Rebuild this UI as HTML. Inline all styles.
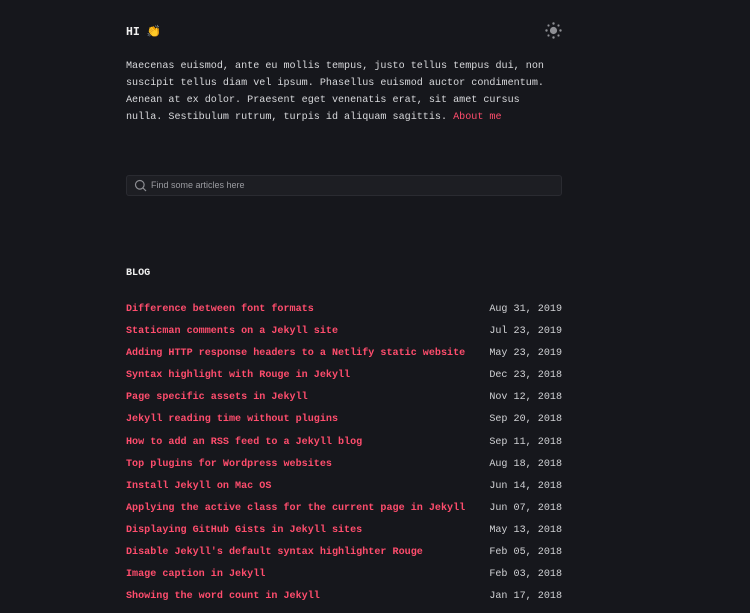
<!DOCTYPE html>
<html><head><meta charset="utf-8"><style>
html,body{margin:0;background:#16171c;}
body{width:750px;height:600px;overflow:hidden;font-family:"Liberation Mono",monospace;color:#d8d9dc;font-size:10.1px;}
.wrap{position:absolute;left:126px;width:436px;}
.hi{position:absolute;left:126px;top:24px;font-weight:bold;font-size:11.5px;color:#f0f0f0;font-family:"Liberation Mono","DejaVu Sans",monospace;}
.sun{position:absolute;left:545px;top:22px;}
.intro{top:58px;line-height:17px;width:425px;}
a{color:#ff4d6d;text-decoration:none;}
.search{position:absolute;left:126px;top:175px;width:434px;height:19px;border:1px solid #2a2b31;background:#1d1e23;border-radius:3px;}
.search span{position:absolute;left:24px;top:4px;font-family:"Liberation Sans",sans-serif;font-size:9px;color:#9a9ba0;}
.blog{top:268px;font-weight:bold;color:#f0f0f0;}
.list{top:304px;}
.row{height:22.1px;display:flex;justify-content:space-between;align-items:flex-start;}
.row a{font-weight:bold;}
.row span{color:#d0d1d4;}
</style></head><body>
<div class="hi">HI 👏</div>
<svg class="sun" width="17" height="17" viewBox="0 0 17 17"><circle cx="8.5" cy="8.5" r="3.6" fill="#8e8f94"/><g fill="#8e8f94"><circle cx="8.5" cy="1.5" r="1.2"/><circle cx="8.5" cy="15.5" r="1.2"/><circle cx="1.5" cy="8.5" r="1.2"/><circle cx="15.5" cy="8.5" r="1.2"/><circle cx="3.5" cy="3.5" r="1.1"/><circle cx="13.5" cy="3.5" r="1.1"/><circle cx="3.5" cy="13.5" r="1.1"/><circle cx="13.5" cy="13.5" r="1.1"/></g></svg>
<div class="wrap intro">Maecenas euismod, ante eu mollis tempus, justo tellus tempus dui, non suscipit tellus diam vel ipsum. Phasellus euismod auctor condimentum. Aenean at ex dolor. Praesent eget venenatis erat, sit amet cursus nulla. Sestibulum rutrum, turpis id aliquam sagittis. <a>About me</a></div>
<div class="search"><svg style="position:absolute;left:7px;top:3px" width="13" height="13" viewBox="0 0 13 13"><circle cx="5.8" cy="5.8" r="4.3" fill="none" stroke="#8e8f94" stroke-width="1.2"/><line x1="9" y1="9" x2="12" y2="12" stroke="#8e8f94" stroke-width="1.2"/></svg><span>Find some articles here</span></div>
<div class="wrap blog">BLOG</div>
<div class="wrap list">
<div class="row"><a>Difference between font formats</a><span>Aug 31, 2019</span></div>
<div class="row"><a>Staticman comments on a Jekyll site</a><span>Jul 23, 2019</span></div>
<div class="row"><a>Adding HTTP response headers to a Netlify static website</a><span>May 23, 2019</span></div>
<div class="row"><a>Syntax highlight with Rouge in Jekyll</a><span>Dec 23, 2018</span></div>
<div class="row"><a>Page specific assets in Jekyll</a><span>Nov 12, 2018</span></div>
<div class="row"><a>Jekyll reading time without plugins</a><span>Sep 20, 2018</span></div>
<div class="row"><a>How to add an RSS feed to a Jekyll blog</a><span>Sep 11, 2018</span></div>
<div class="row"><a>Top plugins for Wordpress websites</a><span>Aug 18, 2018</span></div>
<div class="row"><a>Install Jekyll on Mac OS</a><span>Jun 14, 2018</span></div>
<div class="row"><a>Applying the active class for the current page in Jekyll</a><span>Jun 07, 2018</span></div>
<div class="row"><a>Displaying GitHub Gists in Jekyll sites</a><span>May 13, 2018</span></div>
<div class="row"><a>Disable Jekyll's default syntax highlighter Rouge</a><span>Feb 05, 2018</span></div>
<div class="row"><a>Image caption in Jekyll</a><span>Feb 03, 2018</span></div>
<div class="row"><a>Showing the word count in Jekyll</a><span>Jan 17, 2018</span></div>
</div>
</body></html>
